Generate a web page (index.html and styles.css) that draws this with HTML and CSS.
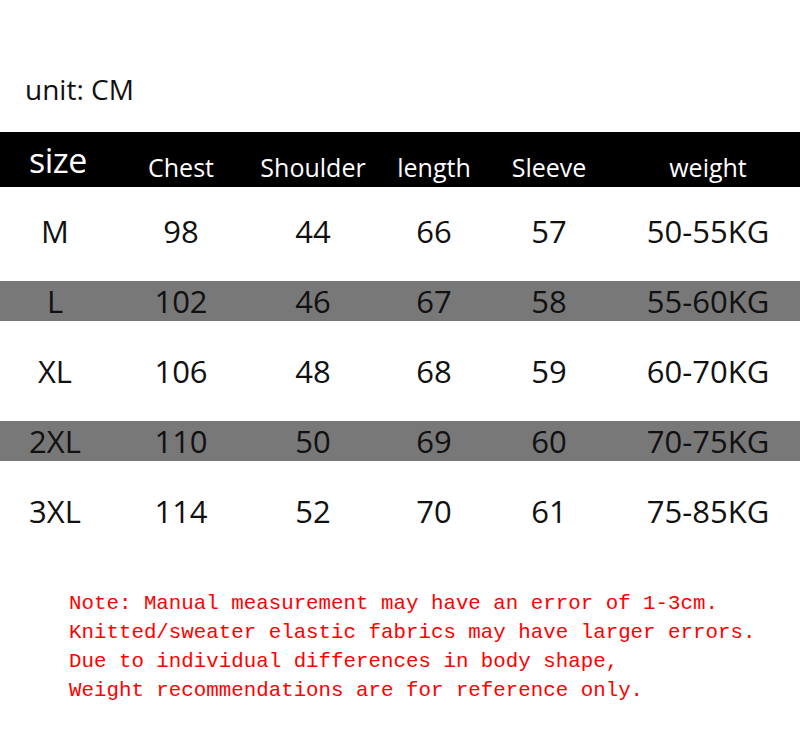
FILE: index.html
```html
<!DOCTYPE html>
<html>
<head>
<meta charset="utf-8">
<link rel="stylesheet" href="styles.css">
</head>
<body>
<div class="page">
  <div class="unit">unit: CM</div>
  <div class="table">
    <div class="row head">
      <span class="c1 size">size</span>
      <span>Chest</span>
      <span>Shoulder</span>
      <span>length</span>
      <span>Sleeve</span>
      <span class="c6">weight</span>
    </div>
    <div class="row data"><span class="c1">M</span><span>98</span><span>44</span><span>66</span><span>57</span><span class="c6">50-55KG</span></div>
    <div class="row data band"><span class="c1">L</span><span>102</span><span>46</span><span>67</span><span>58</span><span class="c6">55-60KG</span></div>
    <div class="row data"><span class="c1">XL</span><span>106</span><span>48</span><span>68</span><span>59</span><span class="c6">60-70KG</span></div>
    <div class="row data band"><span class="c1">2XL</span><span>110</span><span>50</span><span>69</span><span>60</span><span class="c6">70-75KG</span></div>
    <div class="row data"><span class="c1">3XL</span><span>114</span><span>52</span><span>70</span><span>61</span><span class="c6">75-85KG</span></div>
  </div>
  <div class="note">
    <div class="line">Note: Manual measurement may have an error of 1-3cm.</div>
    <div class="line">Knitted/sweater elastic fabrics may have larger errors.</div>
    <div class="line">Due to individual differences in body shape,</div>
    <div class="line">Weight recommendations are for reference only.</div>
  </div>
</div>
</body>
</html>
```
FILE: styles.css
```css
html, body {
  margin: 0;
  padding: 0;
  background: #fff;
}
.page {
  width: 800px;
  height: 756px;
  padding-top: 75px;
  box-sizing: border-box;
  font-family: "Open Sans", "Noto Sans", sans-serif;
  overflow: hidden;
}
.unit {
  margin-left: 25px;
  font-size: 28px;
  line-height: 28px;
  color: #111;
}
.table {
  margin-top: 29px;
  display: flex;
  flex-direction: column;
}
.row {
  display: grid;
  grid-template-columns: 110px 142px 122px 120px 110px 196px;
  text-align: center;
}
.row .c6 {
  padding-left: 12px;
}
.head {
  height: 55px;
  background: #000;
  color: #fff;
  align-items: end;
  font-size: 25px;
  line-height: 25px;
  box-sizing: border-box;
  padding-bottom: 7px;
}
.head .size {
  font-size: 34px;
  line-height: 34px;
  padding-bottom: 3px;
  padding-left: 6px;
  letter-spacing: -0.5px;
}
.data {
  height: 40px;
  margin-top: 30px;
  font-size: 31px;
  line-height: 40px;
  color: #111;
}
.table .data:nth-child(2) {
  margin-top: 24px;
}
.band {
  background: #787878;
}
.note {
  margin-top: 58px;
  margin-left: 69px;
  font-family: "Liberation Mono", "DejaVu Sans Mono", monospace;
  font-size: 20.8px;
  line-height: 29px;
  color: #f00;
}
.line {
  white-space: nowrap;
}
```
